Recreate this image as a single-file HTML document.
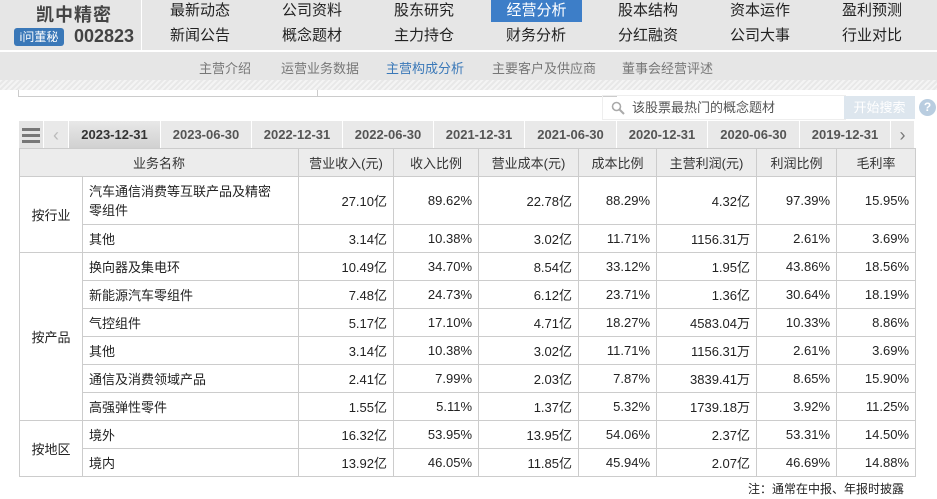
<!DOCTYPE html>
<html><head><meta charset="utf-8"><style>
*{margin:0;padding:0;box-sizing:border-box}
body{width:937px;height:499px;overflow:hidden;background:#fff;font-family:"Liberation Sans","Noto Sans CJK SC",sans-serif;color:#333;position:relative}
.top{position:absolute;left:0;top:0;width:937px;height:51px;background:#e6e6e6;border-bottom:1px solid #fff}
.logo{position:absolute;left:0;top:0;width:142px;height:51px;border-right:1px solid #fff}
.nm{position:absolute;left:36px;top:1px;font-size:18px;font-weight:bold;color:#444;letter-spacing:1px}
.badge{position:absolute;left:14px;top:28px;width:50px;height:18px;background:#3a78b8;border-radius:3px;color:#fff;font-size:12px;line-height:18px;text-align:center}
.code{position:absolute;left:74px;top:26px;font-size:18px;font-weight:bold;color:#444}
.nav{position:absolute;font-size:15px;color:#222;width:92px;text-align:center;line-height:22px}
.act{background:#3d7ec8;color:#fff}
.sub{position:absolute;left:0;top:52px;width:937px;height:28px;background:#e6e6e6;font-size:13px;color:#777}
.sub span{position:absolute;top:6px}
.stripe{position:absolute;left:0;top:80px;width:937px;height:10px;background:repeating-linear-gradient(135deg,#f4f4f4 0 2px,#e8e8e8 2px 4px)}
.tab{position:absolute;top:121px;height:28px;background:#e9e9e9;font-size:13px;font-weight:bold;color:#555;text-align:center;line-height:28px;border-right:1px solid #fff}
table{position:absolute;left:19px;top:148px;border-collapse:collapse;font-size:13px;color:#222;table-layout:fixed;width:896px}
td{border:1px solid #ccc;height:28px;padding:0 6px;text-align:right}
tr.h td{background:#ececec;text-align:center;color:#333}
td.l{text-align:left;padding-right:2px}
td.c{text-align:center}
</style></head><body>
<div class="top">
<div class="logo"><div class="nm">凯中精密</div><div class="badge">i问董秘</div><div class="code">002823</div></div>
<div class="nav" style="left:154px;top:0">最新动态</div>
<div class="nav" style="left:266px;top:0">公司资料</div>
<div class="nav" style="left:378px;top:0">股东研究</div>
<div class="nav act" style="left:491px;top:0;width:91px">经营分析</div>
<div class="nav" style="left:602px;top:0">股本结构</div>
<div class="nav" style="left:714px;top:0">资本运作</div>
<div class="nav" style="left:826px;top:0">盈利预测</div>
<div class="nav" style="left:154px;top:25px">新闻公告</div>
<div class="nav" style="left:266px;top:25px">概念题材</div>
<div class="nav" style="left:378px;top:25px">主力持仓</div>
<div class="nav" style="left:490px;top:25px">财务分析</div>
<div class="nav" style="left:602px;top:25px">分红融资</div>
<div class="nav" style="left:714px;top:25px">公司大事</div>
<div class="nav" style="left:826px;top:25px">行业对比</div>
</div>
<div class="sub">
<span style="left:199px">主营介绍</span><span style="left:281px">运营业务数据</span><span style="left:386px;color:#3a78b8">主营构成分析</span><span style="left:492px">主要客户及供应商</span><span style="left:622px">董事会经营评述</span>
</div>
<div class="stripe"></div>
<div style="position:absolute;left:18px;top:90px;width:300px;height:7px;border:1px solid #ccc;border-top:none"></div>
<div style="position:absolute;left:317px;top:90px;width:300px;height:7px;border-bottom:1px solid #ccc"></div>
<div style="position:absolute;left:602px;top:95px;width:244px;height:25px;border:1px solid #eee;font-size:13px;color:#555;line-height:24px;padding-left:29px">该股票最热门的概念题材
<svg style="position:absolute;left:8px;top:5px" width="14" height="14"><circle cx="5.5" cy="5.5" r="4" fill="none" stroke="#aaa" stroke-width="1.6"/><line x1="8.5" y1="8.5" x2="13" y2="13" stroke="#aaa" stroke-width="2"/></svg></div>
<div style="position:absolute;left:844px;top:96px;width:71px;height:23px;background:#dde6ee;color:#fff;font-size:13px;text-align:center;line-height:23px">开始搜索</div>
<div style="position:absolute;left:919px;top:99px;width:17px;height:17px;border-radius:50%;background:#b9cde0;color:#fff;font-size:12px;font-weight:bold;text-align:center;line-height:17px">?</div>
<div class="tab" style="left:19px;width:25px;background:#e4e4e4"><svg width="20" height="16" style="margin-top:6px"><rect x="1" y="1" width="18" height="3" fill="#777"/><rect x="1" y="7" width="18" height="3" fill="#777"/><rect x="1" y="13" width="18" height="3" fill="#777"/></svg></div>
<div class="tab" style="left:44px;width:25px;color:#bbb;font-weight:normal;font-size:18px">‹</div>
<div class="tab" style="left:69px;width:92px;background:linear-gradient(#e8e8e8,#d0d0d0);color:#333">2023-12-31</div>
<div class="tab" style="left:161px;width:91px">2023-06-30</div>
<div class="tab" style="left:252px;width:91px">2022-12-31</div>
<div class="tab" style="left:343px;width:91px">2022-06-30</div>
<div class="tab" style="left:434px;width:91px">2021-12-31</div>
<div class="tab" style="left:525px;width:92px">2021-06-30</div>
<div class="tab" style="left:617px;width:91px">2020-12-31</div>
<div class="tab" style="left:708px;width:92px">2020-06-30</div>
<div class="tab" style="left:800px;width:91px">2019-12-31</div>
<div class="tab" style="left:891px;width:24px;color:#777;font-weight:normal;font-size:18px">›</div>
<table>
<colgroup><col width="63"><col width="216"><col width="95"><col width="85"><col width="100"><col width="78"><col width="100"><col width="80"><col width="79"></colgroup>
<tr class="h"><td colspan="2">业务名称</td><td>营业收入(元)</td><td>收入比例</td><td>营业成本(元)</td><td>成本比例</td><td>主营利润(元)</td><td>利润比例</td><td>毛利率</td></tr>
<tr><td class="c" rowspan="2">按行业</td><td class="l" style="height:48px;line-height:19px;padding-right:14px">汽车通信消费等互联产品及精密<br>零组件</td><td>27.10亿</td><td>89.62%</td><td>22.78亿</td><td>88.29%</td><td>4.32亿</td><td>97.39%</td><td>15.95%</td></tr>
<tr><td class="l">其他</td><td>3.14亿</td><td>10.38%</td><td>3.02亿</td><td>11.71%</td><td>1156.31万</td><td>2.61%</td><td>3.69%</td></tr>
<tr><td class="c" rowspan="6">按产品</td><td class="l">换向器及集电环</td><td>10.49亿</td><td>34.70%</td><td>8.54亿</td><td>33.12%</td><td>1.95亿</td><td>43.86%</td><td>18.56%</td></tr>
<tr><td class="l">新能源汽车零组件</td><td>7.48亿</td><td>24.73%</td><td>6.12亿</td><td>23.71%</td><td>1.36亿</td><td>30.64%</td><td>18.19%</td></tr>
<tr><td class="l">气控组件</td><td>5.17亿</td><td>17.10%</td><td>4.71亿</td><td>18.27%</td><td>4583.04万</td><td>10.33%</td><td>8.86%</td></tr>
<tr><td class="l">其他</td><td>3.14亿</td><td>10.38%</td><td>3.02亿</td><td>11.71%</td><td>1156.31万</td><td>2.61%</td><td>3.69%</td></tr>
<tr><td class="l">通信及消费领域产品</td><td>2.41亿</td><td>7.99%</td><td>2.03亿</td><td>7.87%</td><td>3839.41万</td><td>8.65%</td><td>15.90%</td></tr>
<tr><td class="l">高强弹性零件</td><td>1.55亿</td><td>5.11%</td><td>1.37亿</td><td>5.32%</td><td>1739.18万</td><td>3.92%</td><td>11.25%</td></tr>
<tr><td class="c" rowspan="2">按地区</td><td class="l">境外</td><td>16.32亿</td><td>53.95%</td><td>13.95亿</td><td>54.06%</td><td>2.37亿</td><td>53.31%</td><td>14.50%</td></tr>
<tr><td class="l">境内</td><td>13.92亿</td><td>46.05%</td><td>11.85亿</td><td>45.94%</td><td>2.07亿</td><td>46.69%</td><td>14.88%</td></tr>
</table>
<div style="position:absolute;left:748px;top:480px;font-size:12px;color:#222">注：通常在中报、年报时披露</div>
</body></html>
